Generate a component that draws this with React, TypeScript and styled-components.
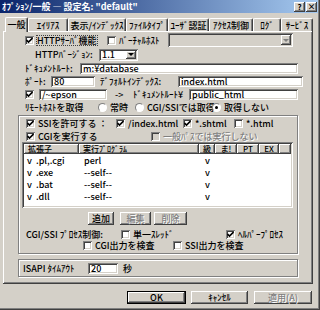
import React from 'react';
import styled, { createGlobalStyle, css } from 'styled-components';

const FACE = '#d4d0c8';
const FONT = '"Noto Sans CJK JP", "Noto Sans", sans-serif';

const Global = createGlobalStyle`
  html, body { margin: 0; padding: 0; background: ${FACE}; }
  body { font-family: ${FONT}; font-size: 9px; font-weight: 500; color: #000; line-height: 1; }
  * { box-sizing: border-box; }
`;

const raised = css`
  box-shadow: inset -1px -1px #404040, inset 1px 1px #ffffff, inset -2px -2px #808080;
`;
const sunken = css`
  box-shadow: inset 1px 1px #808080, inset -1px -1px #ffffff, inset 2px 2px #404040, inset -2px -2px ${FACE};
`;

const Window = styled.div`
  width: 320px;
  height: 310px;
  background: ${FACE};
  display: flex;
  flex-direction: column;
  box-shadow: inset -1px -1px #404040, inset -2px -2px #808080;
  overflow: hidden;
`;

const TitleBar = styled.div`
  height: 13px;
  margin-right: 2px;
  background: linear-gradient(to right, #0a246a, #a6caf0);
  display: flex;
  align-items: center;
  padding: 0 1px 0 2px;
  color: #fff;
  font-weight: bold;
  font-size: 9px;
  white-space: nowrap;
`;

const TitleText = styled.span`
  flex: 1;
`;

const TitleButton = styled.span<{ gap?: number }>`
  width: 11px;
  height: 10px;
  background: ${FACE};
  ${raised};
  color: #000;
  font-size: 8px;
  font-weight: bold;
  display: flex;
  align-items: center;
  justify-content: center;
  margin-left: ${(p) => p.gap ?? 0}px;
`;

const TabStrip = styled.div`
  height: 18px;
  display: flex;
  align-items: flex-end;
  padding-left: 7px;
`;

const Tab = styled.div<{ w: number; active?: boolean }>`
  width: ${(p) => p.w}px;
  height: ${(p) => (p.active ? 15 : 13)}px;
  flex: none;
  margin: 0 0 ${(p) => (p.active ? -1 : 0)}px ${(p) => (p.active ? -2 : 0)}px;
  border-top: 1px solid #fff;
  border-left: 1px solid #fff;
  border-right: 1px solid #404040;
  box-shadow: inset -1px 0 #808080;
  border-radius: 2px 2px 0 0;
  background: ${FACE};
  display: flex;
  align-items: center;
  justify-content: center;
  white-space: nowrap;
  position: relative;
  z-index: ${(p) => (p.active ? 2 : 1)};
  ${(p) => p.active && css`padding-bottom: 1px;`}
`;

const Panel = styled.div`
  margin: 0 7px 0 3px;
  height: 253px;
  ${raised};
  padding: 2px 15px 0 15px;
  display: flex;
  flex-direction: column;
`;

const Row = styled.div<{ h: number; indent?: number; mt?: number }>`
  height: ${(p) => p.h}px;
  margin-top: ${(p) => p.mt ?? 0}px;
  padding-left: ${(p) => p.indent ?? 0}px;
  display: flex;
  align-items: center;
  white-space: nowrap;
  flex: none;
`;

const Cell = styled.div<{ w?: number; ml?: number }>`
  ${(p) => (p.w ? `width: ${p.w}px; flex: none;` : '')}
  margin-left: ${(p) => p.ml ?? 0}px;
  display: flex;
  align-items: center;
`;

const Label = styled.span<{ disabled?: boolean; focus?: boolean }>`
  color: ${(p) => (p.disabled ? '#808080' : '#000')};
  ${(p) => p.disabled && css`text-shadow: 1px 1px #fff;`}
  ${(p) => p.focus && css`outline: 1px dotted #404040; outline-offset: 0;`}
`;

const Box = styled.span<{ disabled?: boolean }>`
  width: 9px;
  height: 9px;
  flex: none;
  background: ${(p) => (p.disabled ? FACE : '#fff')};
  ${sunken};
  display: flex;
  align-items: center;
  justify-content: center;
  margin-right: 3px;
`;

const RadioDot = styled.span`
  width: 9px;
  height: 9px;
  flex: none;
  border-radius: 50%;
  background: #fff;
  border: 1px solid;
  border-color: #808080 #fff #fff #808080;
  display: flex;
  align-items: center;
  justify-content: center;
  margin-right: 3px;
`;

const Dot = styled.span`
  width: 3px;
  height: 3px;
  border-radius: 50%;
  background: #000;
`;

const Field = styled.div<{ w: number; disabled?: boolean; h?: number }>`
  width: ${(p) => p.w}px;
  height: ${(p) => p.h ?? 11}px;
  flex: none;
  background: ${(p) => (p.disabled ? FACE : '#fff')};
  ${sunken};
  display: flex;
  align-items: center;
  padding: 0 2px 0 3px;
  white-space: nowrap;
`;

const ComboText = styled.span`
  flex: 1;
`;

const DropBtn = styled.span`
  width: 10px;
  height: calc(100% - 4px);
  background: ${FACE};
  ${raised};
  display: flex;
  align-items: center;
  justify-content: center;
`;

const Tri = styled.span<{ disabled?: boolean }>`
  width: 0;
  height: 0;
  border-left: 3px solid transparent;
  border-right: 3px solid transparent;
  border-top: 3px solid ${(p) => (p.disabled ? '#808080' : '#000')};
`;

const Group = styled.div<{ h: number; mt: number }>`
  height: ${(p) => p.h}px;
  margin-top: ${(p) => p.mt}px;
  flex: none;
  border: 1px solid #808080;
  box-shadow: 1px 1px #fff, inset 1px 1px #fff;
  display: flex;
  flex-direction: column;
  padding: 0 4px 0 3px;
`;

const ListView = styled.div`
  height: 66px;
  flex: none;
  background: #fff;
  ${sunken};
  padding: 2px;
  display: flex;
  flex-direction: column;
`;

const ListHeader = styled.div`
  height: 10px;
  display: flex;
  flex: none;
  margin-bottom: 1px;
`;

const HeadCell = styled.div<{ w: number; center?: boolean }>`
  width: ${(p) => p.w}px;
  flex: none;
  background: ${FACE};
  ${raised};
  text-align: ${(p) => (p.center ? 'center' : 'left')};
  padding-left: ${(p) => (p.center ? 0 : 4)}px;
  line-height: 10px;
  white-space: nowrap;
  font-size: 8px;
`;

const HeadFill = styled.div`
  flex: 1;
  background: ${FACE};
  ${raised};
`;

const ListRow = styled.div`
  height: 12px;
  display: flex;
  flex: none;
  white-space: nowrap;
`;

const LCell = styled.span<{ w: number; pl?: number }>`
  width: ${(p) => p.w}px;
  flex: none;
  line-height: 12px;
  padding-left: ${(p) => p.pl ?? 0}px;
`;

const Button = styled.div<{ w: number; h?: number; disabled?: boolean; primary?: boolean; ml?: number }>`
  width: ${(p) => p.w}px;
  height: ${(p) => p.h ?? 13}px;
  flex: none;
  margin-left: ${(p) => p.ml ?? 0}px;
  background: ${FACE};
  ${(p) =>
    p.primary
      ? css`box-shadow: inset 0 0 0 1px #000, inset -2px -2px #404040, inset 2px 2px #fff, inset -3px -3px #808080;`
      : raised}
  color: ${(p) => (p.disabled ? '#808080' : '#000')};
  ${(p) => p.disabled && css`text-shadow: 1px 1px #fff;`}
  display: flex;
  align-items: center;
  justify-content: center;
  white-space: nowrap;
`;

const Footer = styled.div`
  display: flex;
  justify-content: flex-end;
  padding: 7px 8px 0 0;
`;

const Check = () => (
  <svg width="7" height="7" viewBox="0 0 7 7">
    <path d="M0.5 3 L2.5 5 L6.5 1" stroke="#000" strokeWidth="1.6" fill="none" />
  </svg>
);

const CheckBox: React.FC<{ checked?: boolean; disabled?: boolean; label?: string; focus?: boolean }> = ({
  checked,
  disabled,
  label,
  focus,
}) => (
  <Cell>
    <Box disabled={disabled}>{checked && <Check />}</Box>
    {label && (
      <Label disabled={disabled} focus={focus}>
        {label}
      </Label>
    )}
  </Cell>
);

const Radio: React.FC<{ checked?: boolean; label: string }> = ({ checked, label }) => (
  <Cell>
    <RadioDot>{checked && <Dot />}</RadioDot>
    <Label>{label}</Label>
  </Cell>
);

const Combo: React.FC<{ w: number; h?: number; value?: string; disabled?: boolean }> = ({ w, h, value, disabled }) => (
  <Field w={w} h={h} disabled={disabled}>
    <ComboText>{value}</ComboText>
    <DropBtn>
      <Tri disabled={disabled} />
    </DropBtn>
  </Field>
);

const tabs: { label: string; w: number; active?: boolean }[] = [
  { label: '一般', w: 23, active: true },
  { label: 'ｴｲﾘｱｽ', w: 40 },
  { label: '表示/ｲﾝﾃﾞｯｸｽ', w: 58 },
  { label: 'ﾌｧｲﾙﾀｲﾌﾟ', w: 42 },
  { label: 'ﾕｰｻﾞ認証', w: 41 },
  { label: 'ｱｸｾｽ制御', w: 44 },
  { label: 'ﾛｸﾞ', w: 28 },
  { label: 'ｻｰﾋﾞｽ', w: 32 },
];

const rows = [
  { ext: '.pl,.cgi', prog: 'perl' },
  { ext: '.exe', prog: '--self--' },
  { ext: '.bat', prog: '--self--' },
  { ext: '.dll', prog: '--self--' },
];

export default function App() {
  return (
    <>
      <Global />
      <Window>
        <TitleBar>
          <TitleText>ｵﾌﾟｼｮﾝ/一般 ― 設定名: "default"</TitleText>
          <TitleButton>?</TitleButton>
          <TitleButton gap={1}>×</TitleButton>
        </TitleBar>
        <TabStrip>
          {tabs.map((t) => (
            <Tab key={t.label} w={t.w} active={t.active}>
              {t.label}
            </Tab>
          ))}
        </TabStrip>
        <Panel>
          <Row h={14} indent={7}>
            <Cell w={82}>
              <CheckBox checked label="HTTPｻｰﾊﾞ機能" focus />
            </Cell>
            <Cell w={61}>
              <CheckBox label="ﾊﾞｰﾁｬﾙﾎｽﾄ" />
            </Cell>
            <Combo w={125} h={14} disabled />
          </Row>
          <Row h={13} indent={17} mt={1}>
            <Cell w={64}>
              <Label>HTTPﾊﾞｰｼﾞｮﾝ:</Label>
            </Cell>
            <Combo w={39} h={12} value="1.1" />
          </Row>
          <Row h={11} indent={7} mt={2}>
            <Cell w={55}>
              <Label>ﾄﾞｷｭﾒﾝﾄﾙｰﾄ:</Label>
            </Cell>
            <Field w={218}>m:¥database</Field>
          </Row>
          <Row h={11} indent={7} mt={2}>
            <Cell w={26}>
              <Label>ﾎﾟｰﾄ:</Label>
            </Cell>
            <Field w={44}>80</Field>
            <Cell w={78} ml={5}>
              <Label>ﾃﾞﾌｫﾙﾄｲﾝﾃﾞｯｸｽ:</Label>
            </Cell>
            <Field w={125}>index.html</Field>
          </Row>
          <Row h={11} indent={7} mt={2}>
            <Cell w={14}>
              <CheckBox checked />
            </Cell>
            <Field w={68}>/~epson</Field>
            <Cell w={18} ml={8}>
              <Label>-&gt;</Label>
            </Cell>
            <Cell w={56}>
              <Label>ﾄﾞｷｭﾒﾝﾄﾙｰﾄ¥</Label>
            </Cell>
            <Field w={109}>public_html</Field>
          </Row>
          <Row h={11} indent={7} mt={2}>
            <Cell w={73}>
              <Label>ﾘﾓｰﾄﾎｽﾄを取得</Label>
            </Cell>
            <Cell w={37}>
              <Radio label="常時" />
            </Cell>
            <Cell w={77}>
              <Radio label="CGI/SSIでは取得" />
            </Cell>
            <Radio checked label="取得しない" />
          </Row>
          <Group h={139} mt={2}>
            <Row h={11} indent={4} mt={2}>
              <Cell w={90}>
                <CheckBox checked label="SSIを許可する ：" />
              </Cell>
              <Cell w={67}>
                <CheckBox checked label="/index.html" />
              </Cell>
              <Cell w={51}>
                <CheckBox checked label="*.shtml" />
              </Cell>
              <CheckBox label="*.html" />
            </Row>
            <Row h={11} indent={4} mt={2}>
              <Cell w={125}>
                <CheckBox checked label="CGIを実行する" />
              </Cell>
              <CheckBox disabled label="一般ﾊﾟｽでは実行しない" />
            </Row>
            <ListView>
              <ListHeader>
                <HeadCell w={55}>拡張子</HeadCell>
                <HeadCell w={120}>実行ﾌﾟﾛｸﾞﾗﾑ</HeadCell>
                <HeadCell w={16} center>
                  級
                </HeadCell>
                <HeadCell w={22} center>
                  ま!
                </HeadCell>
                <HeadCell w={22} center>
                  PT
                </HeadCell>
                <HeadCell w={20} center>
                  EX
                </HeadCell>
                <HeadFill />
              </ListHeader>
              {rows.map((r) => (
                <ListRow key={r.ext}>
                  <LCell w={55} pl={3}>
                    v&nbsp;&nbsp;{r.ext}
                  </LCell>
                  <LCell w={120} pl={5}>
                    {r.prog}
                  </LCell>
                  <LCell w={16} pl={6}>
                    v
                  </LCell>
                </ListRow>
              ))}
            </ListView>
            <Row h={13} indent={66} mt={4}>
              <Button w={26}>追加</Button>
              <Button w={31} ml={6} disabled>
                編集
              </Button>
              <Button w={33} ml={3} disabled>
                削除
              </Button>
            </Row>
            <Row h={11} indent={4} mt={4}>
              <Cell w={95}>
                <Label>CGI/SSI ﾌﾟﾛｾｽ制御:</Label>
              </Cell>
              <Cell w={105}>
                <CheckBox label="単一ｽﾚｯﾄﾞ" />
              </Cell>
              <CheckBox checked label="ﾍﾙﾊﾟｰﾌﾟﾛｾｽ" />
            </Row>
            <Row h={11} indent={61}>
              <Cell w={90}>
                <CheckBox label="CGI出力を検査" />
              </Cell>
              <CheckBox label="SSI出力を検査" />
            </Row>
          </Group>
          <Group h={18} mt={5}>
            <Row h={16} indent={1}>
              <Cell w={65}>
                <Label>ISAPI ﾀｲﾑｱｳﾄ</Label>
              </Cell>
              <Field w={30}>20</Field>
              <Cell ml={5}>
                <Label>秒</Label>
              </Cell>
            </Row>
          </Group>
        </Panel>
        <Footer>
          <Button w={59} primary>
            OK
          </Button>
          <Button w={57} ml={5}>
            ｷｬﾝｾﾙ
          </Button>
          <Button w={58} ml={6} disabled>
            適用(A)
          </Button>
        </Footer>
      </Window>
    </>
  );
}
